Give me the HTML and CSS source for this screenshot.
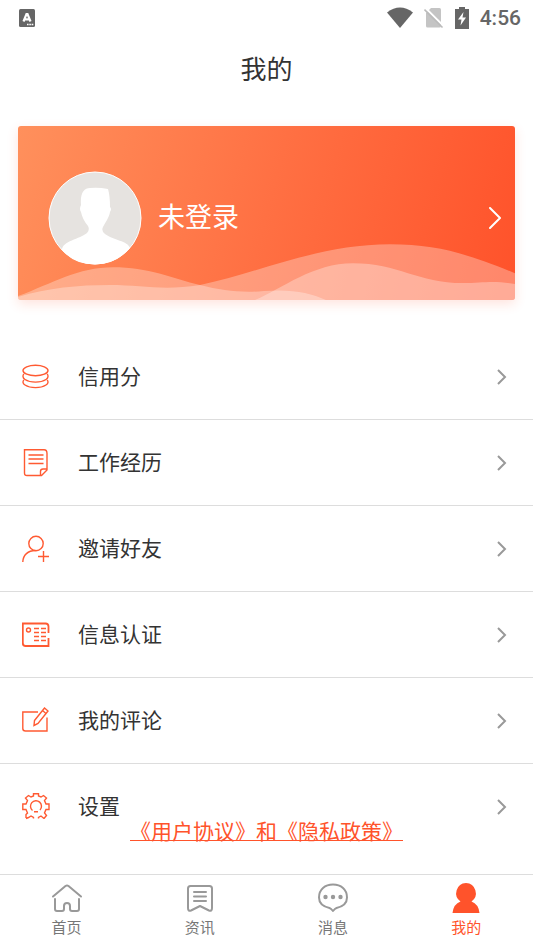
FILE: index.html
```html
<!DOCTYPE html>
<html lang="zh-CN">
<head>
<meta charset="utf-8">
<meta name="viewport" content="width=device-width, initial-scale=1">
<title>我的</title>
<link rel="stylesheet" href="styles.css">
</head>
<body>
<div class="statusbar">
  <svg class="status-app" width="16" height="18" viewBox="0 0 16 18" aria-hidden="true">
    <rect width="16" height="18" rx="1.5" fill="#666"/>
    <path d="M4.5 12.500 7.500 5h1l3 7.500M5.800 10.300h4.600" fill="none" stroke="#fff" stroke-width="2.200"/>
    <path d="M8 15.500h7" stroke="#fff" stroke-width="1.400" stroke-dasharray="1.600 .7"/>
  </svg>
  <div class="status-right">
    <svg width="26" height="22" viewBox="0 0 26 22" aria-hidden="true"><path d="M0 5.500Q13-4.500 26 5.500L13 21z" fill="#666"/></svg>
    <svg width="20" height="22" viewBox="0 0 20 22" aria-hidden="true">
      <path d="M7 1h8.500a1.500 1.500 0 0 1 1.500 1.500V19a1.500 1.500 0 0 1-1.500 1.500h-12A1.500 1.500 0 0 1 2 19V6z" fill="#c4c4c4"/>
      <path d="M1 .5 20 19.500" stroke="#fff" stroke-width="2"/>
      <path d="M.5 2.500 18.500 20.500" stroke="#bbb" stroke-width="1.600"/>
    </svg>
    <svg width="14" height="22" viewBox="0 0 14 22" aria-hidden="true">
      <path d="M4 0h6v2h4v20H0V2h4z" fill="#666"/>
      <path d="M8.500 5 3 12.500h3.500L5.500 18.500l5.500-8H7.500z" fill="#fff"/>
    </svg>
    <span class="clock">4:56</span>
  </div>
</div>
<header class="header"><h1 class="title">我的</h1></header>
<main class="content">
  <a class="profile" href="#login">
    <svg class="waves" viewBox="0 0 497 175" preserveAspectRatio="none" aria-hidden="true">
      <path d="M0 171C35 158 60 142 95 142S155 153 182 160C205 166 225 168 246 166C275 164 292 168 308 175H0z"/>
      <path d="M0 172C30 163 60 160 92 160S145 166 182 160C240 148 300 119 372 119C420 119 450 129 497 148V175H0z"/>
      <path d="M237 175C265 163 295 138 335 138C380 138 400 158 445 158C465 158 475 155 497 159V175z"/>
    </svg>
    <svg class="avatar" viewBox="0 0 94 94" aria-hidden="true">
      <circle cx="47" cy="47" r="46" fill="#e6e3e0" stroke="#fff"/>
      <path d="M14 79C14 70 32 68 39 62Q42 59 40 55C36 50 34 46 33 41Q31 38 33 34C32 22 36 17 42 17Q50 16 60 18Q62 25 62 36Q64 38 62 41C61 47 57 52 55 56Q53 60 57 63C65 69 80 70 82 77Q68 93.500 47 93.500T14 79z" fill="#fff"/>
    </svg>
    <span class="profile-name">未登录</span>
    <svg class="profile-arrow" width="12" height="22" viewBox="0 0 12 22" aria-hidden="true"><path d="m1 1 10 10L1 21"/></svg>
  </a>
  <nav aria-label="个人中心">
    <ul class="menu">
      <li><a class="row" href="#credit">
        <svg class="icon" viewBox="0 0 28 28" aria-hidden="true"><ellipse cx="13.500" cy="7.500" rx="12.500" ry="5.200"/><path d="M2 11C.5 12 .5 15 3 16.500C8.500 20 18.500 20 24 16.500C26.500 15 26.500 12 25 11M2 17C.5 18 .5 20.500 3 22C8.500 25.500 18.500 25.500 24 22C26.500 20.500 26.500 18 25 17"/></svg>
        <span class="label">信用分</span><svg class="arrow" viewBox="0 0 10 18" aria-hidden="true"><path d="m1 2 7 7-7 7"/></svg></a></li>
      <li><a class="row" href="#work">
        <svg class="icon" viewBox="0 0 28 28" aria-hidden="true"><path d="M2.500 .8H22Q25 .8 25 4.500V21L19.500 26.500H5Q2.500 26.500 2.500 24zM25 20H21Q18.500 20 18.500 22.500V26.500M6.500 6H21.500M6.500 10H21.500M6.500 14.500H21.500"/></svg>
        <span class="label">工作经历</span><svg class="arrow" viewBox="0 0 10 18" aria-hidden="true"><path d="m1 2 7 7-7 7"/></svg></a></li>
      <li><a class="row" href="#invite">
        <svg class="icon" viewBox="0 0 28 28" aria-hidden="true"><circle cx="14" cy="8.500" r="7.200"/><path d="M.8 27C1 20 6 15.500 13.500 15.500M16 21.500H27M21.500 16V27"/></svg>
        <span class="label">邀请好友</span><svg class="arrow" viewBox="0 0 10 18" aria-hidden="true"><path d="m1 2 7 7-7 7"/></svg></a></li>
      <li><a class="row" href="#verify">
        <svg class="icon" viewBox="0 0 28 28" aria-hidden="true"><path d="M26.500 12V5.500Q26.500 2.500 23.500 2.500H.8V22Q.8 25 3.500 25H26.500V17" stroke-width="1.800"/><circle cx="6.500" cy="9" r="2"/><path d="M12 7.500H17M19 7.500H24M12 11.500H17M19 11.500H24M12 15.500H17M19 15.500H24M12 19.500H17M19 19.500H24"/></svg>
        <span class="label">信息认证</span><svg class="arrow" viewBox="0 0 10 18" aria-hidden="true"><path d="m1 2 7 7-7 7"/></svg></a></li>
      <li><a class="row" href="#comments">
        <svg class="icon" viewBox="0 0 28 28" aria-hidden="true"><path d="M16 5H.8V21.500Q.8 24 3.500 24H25V10.500M12.500 13.500 22.500 1 26 4 16 16.500 12 18.500zM20.500 3.500 24 6.500"/></svg>
        <span class="label">我的评论</span><svg class="arrow" viewBox="0 0 10 18" aria-hidden="true"><path d="m1 2 7 7-7 7"/></svg></a></li>
      <li><a class="row" href="#settings">
        <svg class="icon" viewBox="0 0 28 28" aria-hidden="true"><path d="M4 25V21.500L5.500 20 4 16.500H.8V11H4L5.500 7.500 3.500 5 6.500 2.500 9 4 11.500 3V.8H16.500V3L19 4 21.500 2.500 24.500 5 22.500 7.500 24 11H27V16.500H24L22.500 20 24.500 22.500 22 25.500M4 25.500 6.500 24.500 9 23 11.500 24.500V25.500M16.500 25.500V24.500L19 23 22 25.500"/><path d="M10.500 17.500A5.500 5.500 0 1 1 18 17M12 18.800H16"/></svg>
        <span class="label">设置</span><svg class="arrow" viewBox="0 0 10 18" aria-hidden="true"><path d="m1 2 7 7-7 7"/></svg></a></li>
    </ul>
  </nav>
  <a class="agreement" href="#agreement">《用户协议》和《隐私政策》</a>
</main>
<nav class="tabbar" aria-label="主导航">
  <a class="tab" href="#home">
    <svg class="tab-icon" viewBox="0 0 32 32" aria-hidden="true"><path d="M2 14.500 14.500 4Q16 3 17.500 4L30 14.500M4 17V27Q4 29 6 29H11Q13 29 13 27V24Q13 21 16 21T19 24V27Q19 29 21 29H26Q28 29 28 27V17"/></svg>
    <span>首页</span></a>
  <a class="tab" href="#news">
    <svg class="tab-icon" viewBox="0 0 32 32" aria-hidden="true"><path d="M6.500 4H25.500Q28 4 28 6.500V26Q28 29.500 25 28.500L16 24 7 28.500Q4 29.500 4 26V6.500Q4 4 6.500 4zM10 10H22M10 14.500H22M10 19H22"/></svg>
    <span>资讯</span></a>
  <a class="tab" href="#messages">
    <svg class="tab-icon" viewBox="0 0 32 32" aria-hidden="true"><path d="M12.500 26C6 24.500 2 21 2 15.500C2 7.500 8 2.500 16 2.500S30 7.500 30 15.500C30 21 26 24.500 19.500 26Q18 26.500 16 29 14 26.500 12.500 26z"/><g fill="#999" stroke="none"><circle cx="8.500" cy="15" r="2.200"/><circle cx="16" cy="15" r="2.200"/><circle cx="23.500" cy="15" r="2.200"/></g></svg>
    <span>消息</span></a>
  <a class="tab tab-active" href="#me" aria-current="page">
    <svg class="tab-icon" viewBox="0 0 32 32" aria-hidden="true"><path d="M16 1A10.200 10.200 0 0 1 21.500 19.500Q28.500 22 29.500 31H2.500Q3.500 22 10.500 19.500A10.200 10.200 0 0 1 16 1z"/></svg>
    <span>我的</span></a>
</nav>
</body>
</html>
```
FILE: styles.css
```css
* { box-sizing: border-box; }

body {
  margin: 0;
  min-height: 100vh;
  display: flex;
  flex-direction: column;
  background: #fff;
  color: #333;
  font-family: Roboto, "Noto Sans CJK SC", sans-serif;
}

a { color: inherit; text-decoration: none; }
svg { display: block; flex: none; }

.statusbar {
  display: flex;
  align-items: center;
  justify-content: space-between;
  height: 36px;
  padding: 0 12px 0 19px;
}
.status-right { display: flex; align-items: center; gap: 11px; }
.clock { color: #666; font-size: 21px; font-weight: 500; line-height: 24px; }

.header { height: 66px; text-align: center; }
.title { margin: 0; font-size: 26px; font-weight: 400; line-height: 68px; }

.content { position: relative; flex: 1; padding-top: 24px; }

.profile {
  position: relative;
  display: flex;
  align-items: center;
  height: 174px;
  margin: 0 18px 34px;
  padding: 9px 14px 0 30px;
  border-radius: 3px;
  background: linear-gradient(105deg, #ff905c, #ff7043 50%, #ff522a);
  box-shadow: 0 4px 12px rgba(255, 83, 43, 0.16);
  color: #fff;
}
.waves {
  position: absolute;
  inset: 0;
  width: 100%;
  height: 100%;
  border-radius: 3px;
  fill: rgba(255, 255, 255, 0.3);
}
.avatar { position: relative; width: 94px; height: 94px; margin-right: 16px; }
.profile-name { position: relative; flex: 1; font-size: 27px; line-height: 40px; }
.profile-arrow { position: relative; fill: none; stroke: #fff; stroke-width: 2; stroke-linecap: round; stroke-linejoin: round; }

.menu { margin: 0; padding: 0; list-style: none; }
.menu li + li { border-top: 1px solid #ddd; }
.row { display: flex; align-items: center; height: 85px; padding: 0 26px 0 22px; }
.icon { width: 28px; height: 28px; margin-right: 28px; fill: none; stroke: #ff5a32; stroke-width: 1.4; }
.label { flex: 1; font-size: 21px; line-height: 30px; }
.arrow { width: 10px; height: 18px; fill: none; stroke: #999; stroke-width: 2; }

.agreement {
  position: absolute;
  right: 0;
  bottom: 27px;
  left: 0;
  color: #ff532b;
  font-size: 21px;
  line-height: 30px;
  text-align: center;
  text-decoration: underline;
  text-decoration-thickness: 1px;
}

.tabbar { display: grid; grid-template-columns: repeat(4, 1fr); height: 73px; border-top: 1px solid #ddd; }
.tab {
  display: flex;
  flex-direction: column;
  align-items: center;
  padding-top: 7px;
  color: #777;
  font-size: 15px;
  line-height: 24px;
}
.tab-icon { width: 32px; height: 32px; margin-bottom: 2px; fill: none; stroke: #999; stroke-width: 2; stroke-linecap: round; stroke-linejoin: round; }
.tab-active { color: #ff532b; }
.tab-active .tab-icon { fill: #ff532b; stroke: none; }
```
